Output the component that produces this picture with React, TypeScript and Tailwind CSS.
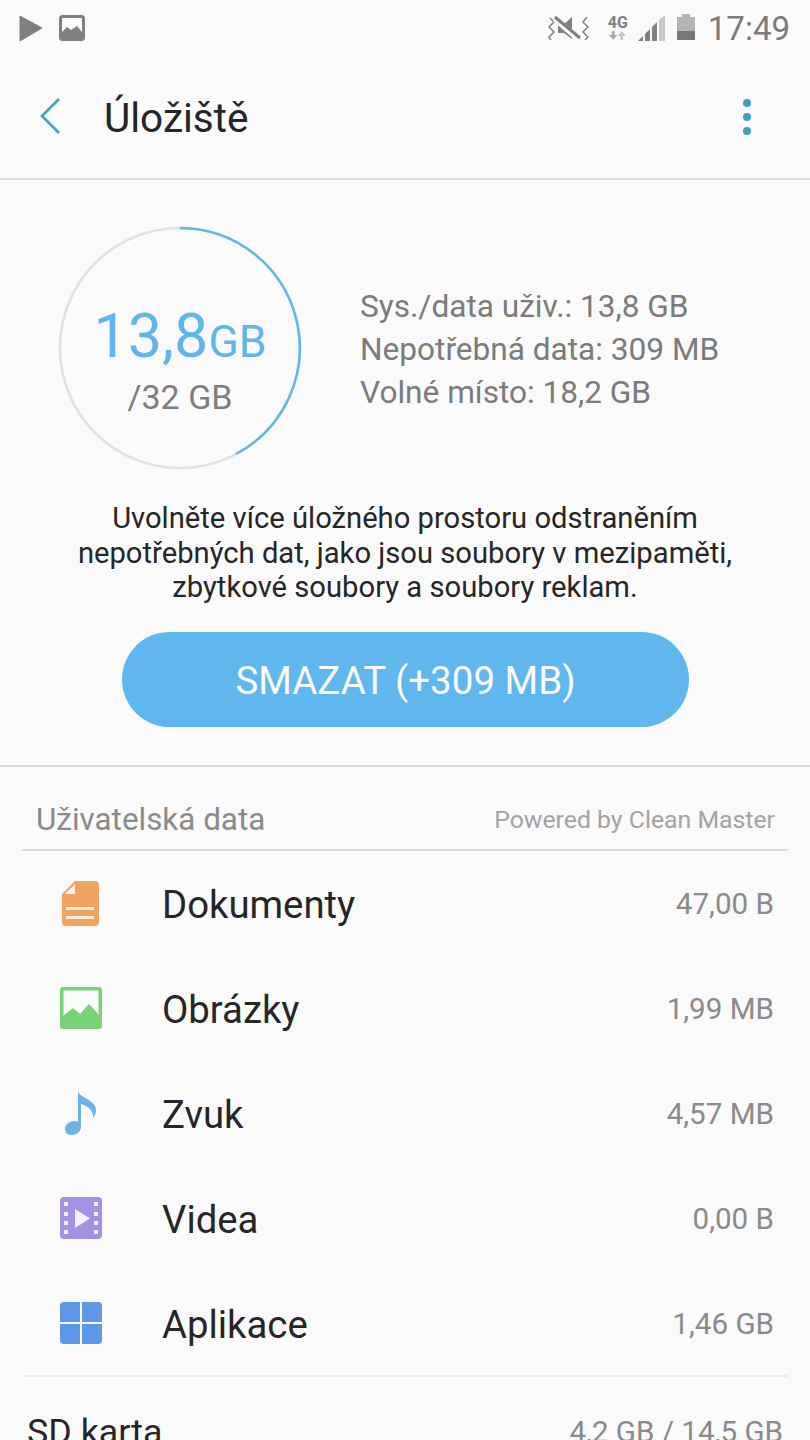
// Úložiště - přehled úložiště
const rowData = [
  { name: 'Dokumenty', size: '47,00 B', icon: <DocIcon /> },
  { name: 'Obrázky', size: '1,99 MB', icon: <ImageIcon /> },
  { name: 'Zvuk', size: '4,57 MB', icon: <NoteIcon /> },
  { name: 'Videa', size: '0,00 B', icon: <VideoIcon /> },
  { name: 'Aplikace', size: '1,46 GB', icon: <AppsIcon /> },
];

function DocIcon() {
  return (
    <svg width="38" height="46" viewBox="0 0 38 46" className="ml-[3px]">
      <path d="M13 0H33Q37 0 37 4V41Q37 45 33 45H4Q0 45 0 41V13Z" fill="#eea35f" />
      <path d="M13 3V13H3Z" fill="#fdf3e8" />
      <rect x="4" y="26" width="28" height="3" fill="#fdeedd" />
      <rect x="4" y="35" width="28" height="3" fill="#fdeedd" />
    </svg>
  );
}

function ImageIcon() {
  return (
    <svg width="43" height="44" viewBox="0 0 43 44" className="ml-[1px]">
      <rect x="0" y="0" width="42" height="42" rx="3" fill="#79d178" />
      <rect x="3.500" y="3.500" width="35" height="35" fill="#fafafa" />
      <path d="M3 29L13 21L20 27L29 17L39 28V39H3Z" fill="#79d178" />
    </svg>
  );
}

function NoteIcon() {
  return (
    <svg width="36" height="46" viewBox="0 0 36 46" className="ml-[5px]">
      <path d="M14 0C15 6 26 7 31 15C33 19 32 23 29 27C30 21 25 15 17 13V36C17 41 12 44 7 44C3 44 1 41 1 38C1 33 6 30 11 30C12 30 13 30 14 31Z" fill="#6fb2e6" />
    </svg>
  );
}

function VideoIcon() {
  return (
    <svg width="43" height="44" viewBox="0 0 43 44" className="ml-[1px]">
      <rect width="42" height="42" rx="4" fill="#a591e2" />
      <g fill="#f4f1fc">
        <rect x="4" y="5" width="4" height="4" />
        <rect x="4" y="15" width="4" height="4" />
        <rect x="4" y="24" width="4" height="4" />
        <rect x="4" y="33" width="4" height="4" />
        <rect x="34" y="5" width="4" height="4" />
        <rect x="34" y="15" width="4" height="4" />
        <rect x="34" y="24" width="4" height="4" />
        <rect x="34" y="33" width="4" height="4" />
        <path d="M15 12L30 21.500L15 31Z" />
      </g>
    </svg>
  );
}

function AppsIcon() {
  return (
    <svg width="43" height="44" viewBox="0 0 43 44" className="ml-[1px]">
      <g fill="#5e97e8">
        <path d="M4 0H20V20H0V4Q0 0 4 0Z" />
        <path d="M22 0H38Q42 0 42 4V20H22Z" />
        <path d="M0 22H20V42H4Q0 42 0 38Z" />
        <path d="M22 22H42V38Q42 42 38 42H22Z" />
      </g>
    </svg>
  );
}

function StatusBar() {
  return (
    <div className="h-[56px] flex items-center justify-between pl-[19px] pr-[20px]">
      <div className="flex items-center gap-[16px]">
        <svg width="24" height="28" viewBox="0 0 24 28">
          <path d="M1 2L23 14L1 27Z" fill="#808080" stroke="#808080" strokeLinejoin="round" strokeWidth="1" />
        </svg>
        <svg width="26" height="26" viewBox="0 0 26 26">
          <rect x="1.500" y="1.500" width="23" height="23" rx="2" fill="#fafafa" stroke="#808080" strokeWidth="3" />
          <path d="M3 17L8 12L12 15L18 11L23 17V24H3Z" fill="#808080" />
        </svg>
      </div>
      <div className="flex items-center">
        <svg width="42" height="28" viewBox="0 0 42 28" className="mr-[18px]">
          <path d="M3 4L7 8L2 13L7 18L2 23L4 26M40 3L36 8L41 13L36 18L41 23L38 26" fill="none" stroke="#808080" strokeWidth="1.500" />
          <path d="M11 10H17L25 3V25L17 19H11Z" fill="#808080" />
          <path d="M8 5L33 26" stroke="#fafafa" strokeWidth="6" />
          <path d="M8 3L33 24" stroke="#808080" strokeWidth="3" />
        </svg>
        <div className="flex flex-col items-center w-[22px] mr-[9px] -mt-[2px]">
          <span className="text-[16px] leading-[15px] font-bold text-[#808080]">4G</span>
          <svg width="17" height="9" viewBox="0 0 18 9" className="mt-[1px]">
            <path d="M3 0H6V4H9L4.500 9L0 4H3Z" fill="#a8a8a8" />
            <path d="M12 9H15V5H18L13.500 0L9 5H12Z" fill="#c4c4c4" />
          </svg>
        </div>
        <svg width="28" height="28" viewBox="0 0 28 28" className="mr-[11px]">
          <path d="M0 27L5 22V27Z" fill="#808080" />
          <path d="M7 27V20L12 15V27Z" fill="#808080" />
          <path d="M14 27V13L19 8V27Z" fill="#808080" />
          <path d="M21 27V6L27 1V27Z" fill="#c8c8c8" />
        </svg>
        <div className="w-[18px] h-[28px] flex flex-col items-center mr-[13px]">
          <div className="w-[8px] h-[3px] bg-[#b4b4b4]" />
          <div className="w-[18px] h-[14px] bg-[#b4b4b4]" />
          <div className="w-[18px] h-[9px] bg-[#787878]" />
        </div>
        <span className="text-[33px] leading-none text-[#7b7b7b]">17:49</span>
      </div>
    </div>
  );
}

function Toolbar() {
  return (
    <div className="h-[124px] flex items-center border-b-2 border-[#d9d9d9] pl-[39px] pr-[59px] pb-[2px]">
      <svg width="22" height="38" viewBox="0 0 22 38" className="shrink-0">
        <path d="M20 2L3 19L20 36" fill="none" stroke="#4aa3c4" strokeWidth="2.800" />
      </svg>
      <div className="ml-[43px] pt-[5px] text-[40.500px] leading-none text-[#252525] flex-1">Úložiště</div>
      <div className="flex flex-col gap-[6px] mt-[2px]">
        <div className="w-[8px] h-[8px] rounded-full bg-[#429dc2]" />
        <div className="w-[8px] h-[8px] rounded-full bg-[#429dc2]" />
        <div className="w-[8px] h-[8px] rounded-full bg-[#429dc2]" />
      </div>
    </div>
  );
}

function Gauge() {
  return (
    <div className="relative w-[244px] h-[244px] shrink-0 flex flex-col items-center">
      <svg width="244" height="244" viewBox="0 0 244 244" className="absolute left-0 top-0">
        <circle cx="122" cy="122" r="120" fill="none" stroke="#e0e0e0" strokeWidth="2.500" />
        <path d="M122 2A120 120 0 0 1 178 228" fill="none" stroke="#60b5ec" strokeWidth="2.500" />
      </svg>
      <div className="relative mt-[75px] flex items-baseline text-[#60b5ec] leading-none">
        <span className="text-[61px] leading-[70px]">13,8</span>
        <span className="text-[44.500px] leading-[70px]">GB</span>
      </div>
      <div className="relative text-[34px] leading-[40px] text-[#7d7d7d]">/32 GB</div>
    </div>
  );
}

export default function App() {
  return (
    <div className="w-[810px] h-[1440px] overflow-hidden bg-[#fafafa] font-['Roboto',sans-serif]">
      <StatusBar />
      <Toolbar />
      <div className="h-[587px] border-b-2 border-[#dcdcdc] flex flex-col">
        <div className="flex items-center pl-[58px] pt-[46px]">
          <Gauge />
          <div className="ml-[58px] mt-[2px] text-[31.600px] leading-[43px] text-[#7b7b7b]">
            <div>Sys./data uživ.: 13,8 GB</div>
            <div>Nepotřebná data: 309 MB</div>
            <div>Volné místo: 18,2 GB</div>
          </div>
        </div>
        <div className="mt-[31px] text-center text-[29.200px] leading-[34.500px] text-[#262626]">
          <div>Uvolněte více úložného prostoru odstraněním</div>
          <div>nepotřebných dat, jako jsou soubory v mezipaměti,</div>
          <div>zbytkové soubory a soubory reklam.</div>
        </div>
        <div className="mt-[27px] ml-[122px] w-[567px] h-[95px] pt-[3px] rounded-full bg-[#60b7ee] flex items-center justify-center text-[38.500px] text-[#fafafa]">
          SMAZAT (+309 MB)
        </div>
      </div>
      <div className="mx-[22px] h-[84px] border-b-2 border-[#dcdcdc] flex items-center justify-between pl-[14px] pr-[13px] pt-[34px] pb-[10px]">
        <span className="text-[31.400px] leading-none text-[#8a8a8a]">Uživatelská data</span>
        <span className="text-[24.800px] leading-none text-[#a3a3a3]">Powered by Clean Master</span>
      </div>
      <div className="mx-[22px] h-[526px] border-b-2 border-[#ececec]">
        {rowData.map((row) => (
          <div key={row.name} className="h-[105px] flex items-center pr-[14px]">
            <div className="w-[118px] pl-[37px] flex items-center">{row.icon}</div>
            <span className="flex-1 pl-[22px] pt-[3px] text-[38.300px] leading-none text-[#262626]">{row.name}</span>
            <span className="pt-[3px] text-[29.600px] leading-none text-[#8a8a8a]">{row.size}</span>
          </div>
        ))}
      </div>
      <div className="mx-[22px] pt-[38px] pl-[5px] pr-[5px] flex items-center justify-between">
        <span className="text-[35.800px] leading-none text-[#262626]">SD karta</span>
        <span className="text-[29.600px] leading-none text-[#8a8a8a]">4,2 GB / 14,5 GB</span>
      </div>
    </div>
  );
}
